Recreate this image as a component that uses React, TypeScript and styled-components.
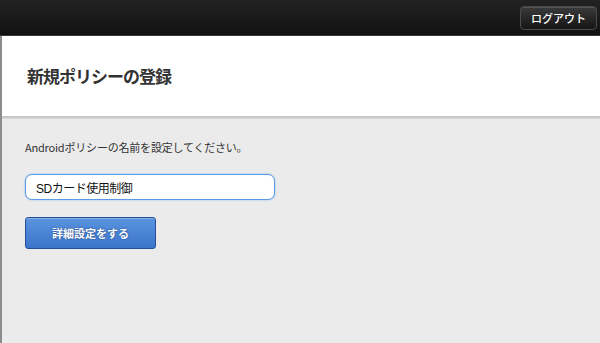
import React, { useState } from 'react';
import styled, { createGlobalStyle } from 'styled-components';

const GlobalStyle = createGlobalStyle`
  html, body {
    margin: 0;
    padding: 0;
    background: #ebebeb;
  }
  body {
    font-family: "Liberation Sans", "Noto Sans CJK JP", sans-serif;
  }
`;

export default function App() {
  const [name, setName] = useState("SDカード使用制御");

  return <>
    <GlobalStyle />
    <Page>
      <TopBar>
        <LogoutButton>ログアウト</LogoutButton>
      </TopBar>
      <Main>
        <TitleSection>
          <Title>新規ポリシーの登録</Title>
        </TitleSection>
        <FormSection>
          <Label>Androidポリシーの名前を設定してください。</Label>
          <NameInput value={name} onChange={e => setName(e.target.value)} />
          <PrimaryButton>詳細設定をする</PrimaryButton>
        </FormSection>
      </Main>
    </Page>
  </>
}

const Page = styled.div`
  display: flex;
  flex-direction: column;
  width: 600px;
  height: 343px;
  overflow: hidden;
`;

const TopBar = styled.div`
  display: flex;
  justify-content: flex-end;
  align-items: flex-start;
  height: 36px;
  box-sizing: border-box;
  padding: 6px 3px 0 0;
  background: linear-gradient(#222 0%, #181818 60%, #111 100%);
  border-bottom: 1px solid #3a3a3a;
`;

const LogoutButton = styled.button`
  width: 77px;
  height: 24px;
  border-radius: 4px;
  border: 1px solid #4a4a4a;
  background: linear-gradient(#3a3a3a, #151515);
  box-shadow: inset 0 1px 0 rgba(255, 255, 255, 0.12);
  color: #fff;
  font-family: "Noto Sans CJK JP", sans-serif;
  font-size: 11px;
  font-weight: 500;
  padding: 0;
  cursor: pointer;
`;

const Main = styled.div`
  flex: 1;
  display: flex;
  flex-direction: column;
  border-left: 2px solid #8c8c8c;
`;

const TitleSection = styled.div`
  height: 82px;
  box-sizing: border-box;
  display: flex;
  align-items: center;
  padding: 0 0 2px 25px;
  background: #fff;
  border-bottom: 2px solid #c8c8c8;
`;

const Title = styled.h1`
  margin: 0;
  font-family: "Noto Sans CJK JP", sans-serif;
  font-size: 17px;
  letter-spacing: -1px;
  font-weight: 700;
  color: #333;
`;

const FormSection = styled.div`
  flex: 1;
  display: flex;
  flex-direction: column;
  align-items: flex-start;
  padding: 20px 0 0 23px;
  background: #ebebeb;
  border-top: 1px solid #d8d8d8;
`;

const Label = styled.div`
  font-family: "Noto Sans CJK JP", sans-serif;
  font-size: 11px;
  letter-spacing: -0.2px;
  color: #333;
  line-height: 16px;
`;

const NameInput = styled.input`
  margin-top: 19px;
  width: 250px;
  height: 26px;
  box-sizing: border-box;
  border: 1px solid #5b9ae6;
  border-radius: 7px;
  box-shadow: 0 0 2px #8ab8f0;
  padding: 0 10px;
  font-family: "Liberation Sans", "Noto Sans CJK JP", sans-serif;
  font-size: 12px;
  letter-spacing: -0.5px;
  color: #111;
  background: #fff;
  outline: none;
`;

const PrimaryButton = styled.button`
  margin-top: 17px;
  width: 131px;
  height: 32px;
  border-radius: 3px;
  border: 1px solid #24509a;
  background: linear-gradient(#5a94de, #3c74cc);
  box-shadow: inset 0 1px 0 rgba(255, 255, 255, 0.25);
  color: #fff;
  font-family: "Noto Sans CJK JP", sans-serif;
  font-size: 11px;
  font-weight: 700;
  text-shadow: 0 0 2px #1d3f7a;
  padding: 0;
  cursor: pointer;
`;
